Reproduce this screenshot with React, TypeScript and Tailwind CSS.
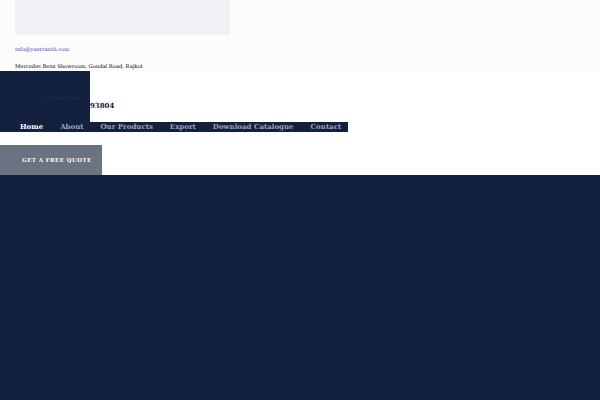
import React from 'react';

const serif = { fontFamily: '"DejaVu Serif", serif' };

export default function App() {
  return (
    <div className="w-[600px] h-[400px] flex flex-col bg-white overflow-hidden" style={serif}>
      <div className="bg-[#fcfcfd] px-[15px] h-[71px] flex flex-col">
        <div className="w-[215px] h-[35px] bg-[#f0f1f5]" />
        <a className="mt-[10px] text-[5.2px] leading-[8px] text-[#3b3bb8] whitespace-nowrap">info@yantransh.com</a>
        <p className="mt-[9px] text-[5.2px] leading-[8px] text-black whitespace-nowrap">Mercedes Benz Showroom, Gondal Road, Rajkot</p>
      </div>
      <div className="flex items-start h-[51px]">
        <div className="w-[90px] h-[51px] bg-[#13213f] flex flex-col pl-[44px] pt-[24px]">
          <span className="text-[5px] leading-[6px] font-bold text-[#1c2b50] whitespace-nowrap">Call Anytime</span>
        </div>
        <span className="mt-[30px] text-[7px] leading-[10px] font-bold text-[#13213f] whitespace-nowrap">93804</span>
      </div>
      <nav className="w-[348px] h-[10px] bg-[#13213f] flex items-center pl-[20px] gap-[17px] text-[7px] leading-[10px] font-bold whitespace-nowrap">
        <span className="text-white">Home</span>
        <span className="text-[#9aa3b8]">About</span>
        <span className="text-[#9aa3b8]">Our Products</span>
        <span className="text-[#9aa3b8]">Export</span>
        <span className="text-[#9aa3b8]">Download Catalogue</span>
        <span className="text-[#9aa3b8]">Contact</span>
      </nav>
      <div className="mt-[13px] w-[102px] h-[30px] bg-[#6b7280] flex items-center pl-[22px]">
        <span className="text-[5.5px] font-bold tracking-[0.08em] text-white whitespace-nowrap">GET A FREE QUOTE</span>
      </div>
      <div className="flex-1 bg-[#13213f]" />
    </div>
  );
}
